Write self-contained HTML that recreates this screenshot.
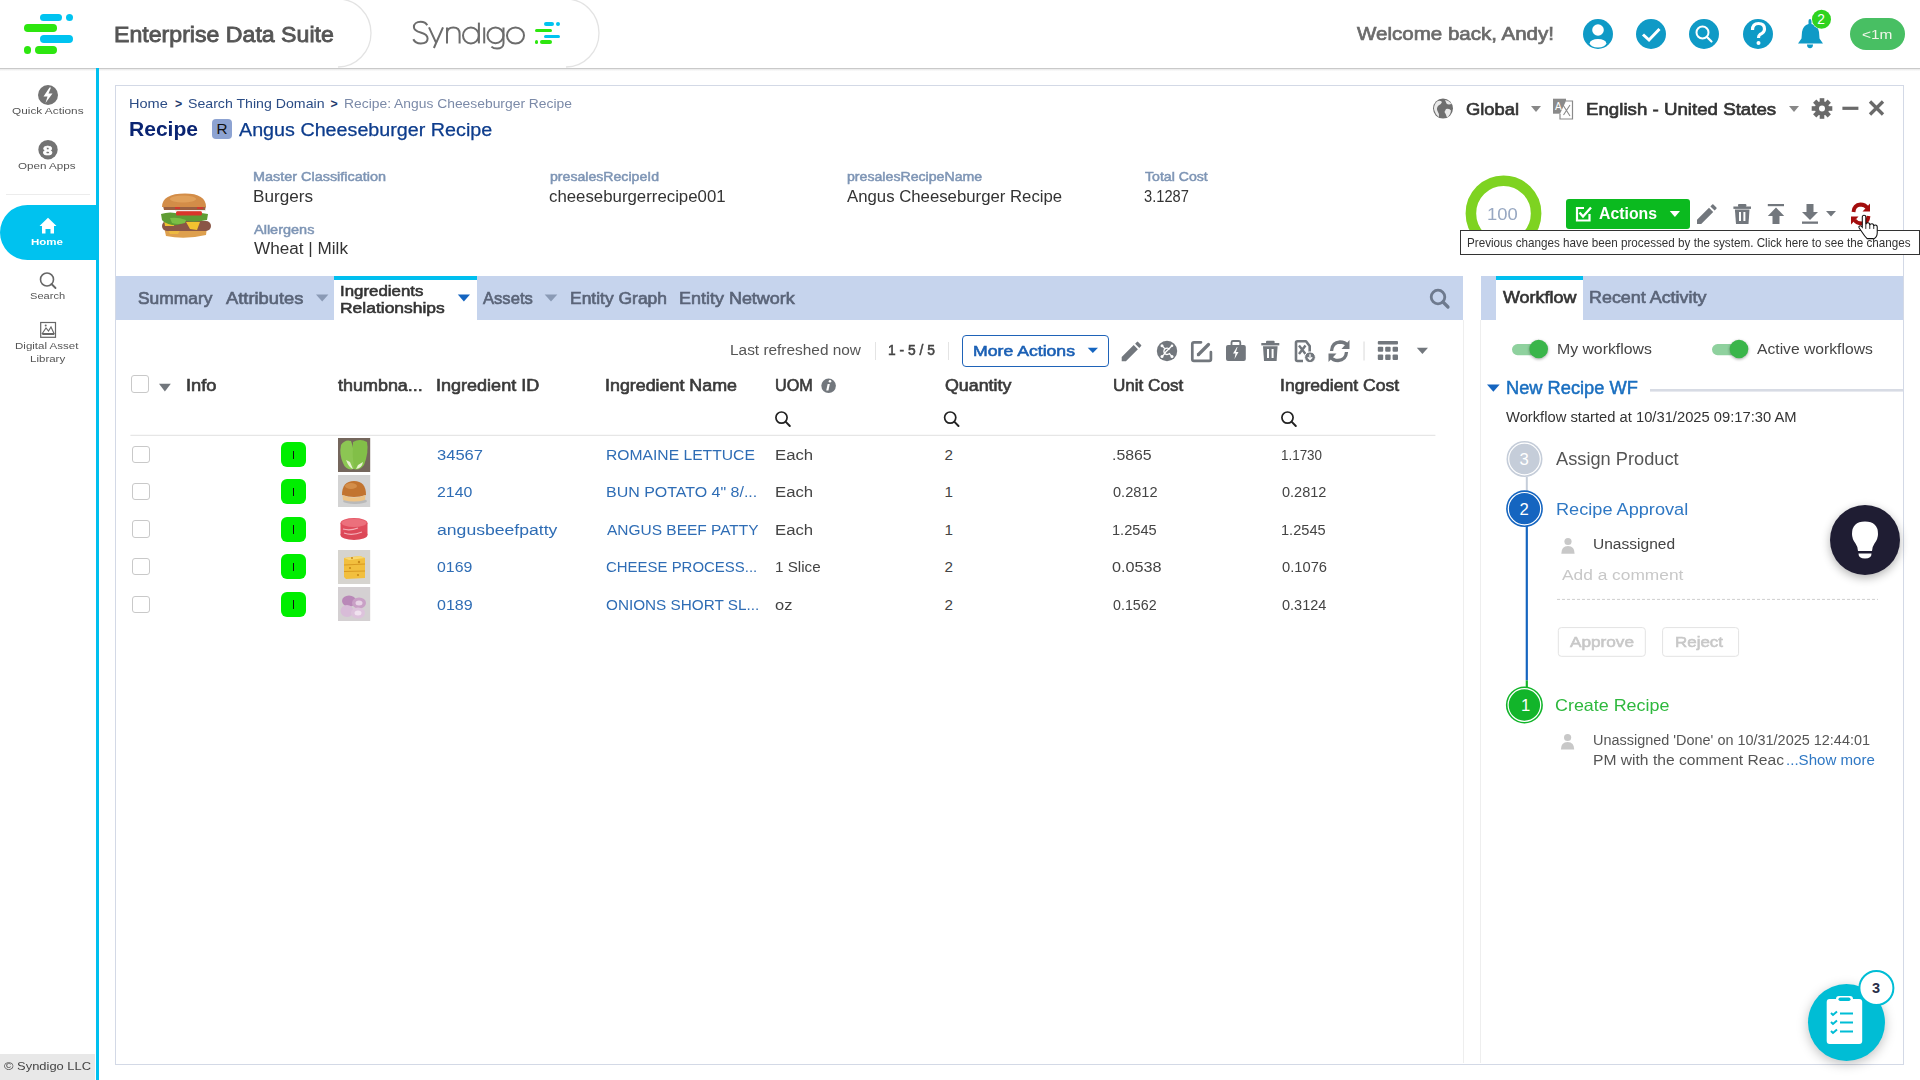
<!DOCTYPE html>
<html><head><meta charset="utf-8"><style>
html,body{margin:0;padding:0;width:1920px;height:1080px;overflow:hidden;background:#fff;}
body{position:relative;font-family:"Liberation Sans",sans-serif;}
.t{position:absolute;white-space:nowrap;line-height:1;transform-origin:0 0;}
svg{overflow:visible}
</style></head><body>
<div style="position:absolute;left:0;top:0;width:1920px;height:68px;background:#fff;"></div>
<div style="position:absolute;left:0;top:68px;width:1920px;height:1px;background:#c9c9c9;"></div>
<div style="position:absolute;left:0;top:69px;width:1920px;height:2px;background:linear-gradient(#e8e8e8,#fdfdfd);"></div>
<svg style="position:absolute;left:0;top:0" width="700" height="70"><path d="M338,-1 A33,34 0 0 1 338,67" fill="none" stroke="#e3e3e3" stroke-width="1.3"/><path d="M566,-1 A33,34 0 0 1 566,67" fill="none" stroke="#e3e3e3" stroke-width="1.3"/></svg>
<div style="position:absolute;left:40px;top:13.5px;width:22px;height:7.5px;background:#00c3f0;border-radius:3.75px"></div>
<div style="position:absolute;left:65.7px;top:13.5px;width:7.0px;height:7.5px;background:#00c3f0;border-radius:3.75px"></div>
<div style="position:absolute;left:24px;top:24.2px;width:32.6px;height:7.600000000000001px;background:#2de60f;border-radius:3.8000000000000007px"></div>
<div style="position:absolute;left:40px;top:35px;width:32.7px;height:7.799999999999997px;background:#00c3f0;border-radius:3.8999999999999986px"></div>
<div style="position:absolute;left:24px;top:46px;width:7px;height:7.799999999999997px;background:#2de60f;border-radius:3.8999999999999986px"></div>
<div style="position:absolute;left:35px;top:46px;width:21.6px;height:7.799999999999997px;background:#2de60f;border-radius:3.8999999999999986px"></div>
<svg style="position:absolute;left:0;top:0" width="600" height="68"><g fill="none" stroke="#6c6c6c" stroke-width="2" stroke-linecap="butt">
<path d="M427.2,25.3 C426,22.8 423.6,21.8 420.6,21.8 C416.6,21.8 413.9,24 413.9,27 C413.9,30.5 417.2,31.6 420.6,32.5 C424.6,33.5 427.6,35 427.6,38.6 C427.6,41.8 424.7,43.5 420.8,43.5 C417.4,43.5 414.6,42 413.3,39.3"/>
<path d="M429,27.4 L436.4,43.4 M443,27.4 L433.9,48"/>
<path d="M447,43.4 L447,27.4 M447,33.6 C447,29.8 449.5,27.5 453.3,27.5 C457.1,27.5 459.6,29.8 459.6,33.8 L459.6,43.4"/>
<ellipse cx="470.9" cy="35.5" rx="7.9" ry="8"/><path d="M478.9,22.6 L478.9,43.4"/>
<path d="M484.2,27.4 L484.2,43.4"/>
<ellipse cx="495.5" cy="35.3" rx="8" ry="7.9"/><path d="M503.5,27.4 L503.5,43.2 C503.5,46.6 500.6,48.6 497.1,48.6 C494.6,48.6 492.6,47.8 491.4,46.6"/>
<ellipse cx="515.5" cy="35.5" rx="8.5" ry="8"/>
</g></svg>
<div style="position:absolute;left:543.5px;top:22px;width:10.5px;height:3.5px;background:#00c3f0;border-radius:2px"></div>
<div style="position:absolute;left:556px;top:22px;width:4px;height:3.5px;background:#00c3f0;border-radius:2px"></div>
<div style="position:absolute;left:534.7px;top:28.5px;width:17.299999999999955px;height:3.5px;background:#2de60f;border-radius:2px"></div>
<div style="position:absolute;left:543.5px;top:34.5px;width:16.5px;height:3.5px;background:#00c3f0;border-radius:2px"></div>
<div style="position:absolute;left:534.7px;top:40px;width:3.2999999999999545px;height:3.5px;background:#2de60f;border-radius:2px"></div>
<div style="position:absolute;left:540px;top:40px;width:12px;height:3.5px;background:#2de60f;border-radius:2px"></div>
<svg style="position:absolute;left:1570px;top:0" width="350" height="68">
<circle cx="28" cy="34" r="15" fill="#0f9ac6"/>
<circle cx="28" cy="30" r="5.8" fill="#fff"/>
<ellipse cx="28" cy="43.3" rx="8.3" ry="4.2" fill="#fff"/>
<circle cx="81" cy="34" r="15" fill="#0f9ac6"/>
<path d="M73,34.5 L79,40 L89.5,29" fill="none" stroke="#fff" stroke-width="3"/>
<circle cx="134" cy="34" r="15" fill="#0f9ac6"/>
<circle cx="132.5" cy="32.5" r="6" fill="none" stroke="#fff" stroke-width="2"/>
<path d="M137,37 L141.5,41.5" stroke="#fff" stroke-width="2.2" stroke-linecap="round"/>
<circle cx="188" cy="34" r="15" fill="#0f9ac6"/>
<path d="M182.5,30 Q182.5,23.5 188.5,23.5 Q194.5,23.5 194.5,29 Q194.5,32.5 190,34.5 Q188.5,35.5 188.5,38" fill="none" stroke="#fff" stroke-width="3.2"/>
<circle cx="188.5" cy="43" r="2" fill="#fff"/>
<path d="M240,19 Q241.5,19 241.5,21 L241.5,24 Q248,25.5 249,32 L249.5,38.5 L253,43.5 L228,43.5 L231.5,38.5 L232,32 Q233,25.5 238.5,24 L238.5,21 Q238.5,19 240,19Z" fill="#0f9ac6"/>
<path d="M237,44.5 L243,44.5 Q243,48.3 240,48.3 Q237,48.3 237,44.5Z" fill="#0f9ac6"/>
<circle cx="251.5" cy="19.3" r="10" fill="#fff"/>
<circle cx="251.5" cy="19.3" r="9.5" fill="#2fd31f"/>
<rect x="280" y="18" width="55" height="32" rx="16" fill="#48bf63"/>
</svg>
<div style="position:absolute;left:96px;top:68px;width:3px;height:1012px;background:#00c0ef"></div>
<svg style="position:absolute;left:0;top:68px" width="96" height="320">
<circle cx="48" cy="27" r="10" fill="#737373"/>
<path d="M49.5,19.5 L43.5,28.5 L47.5,28.5 L45.5,35 L52.5,25.5 L48.5,25.5 L51,19.5Z" fill="#fff"/>
<circle cx="48" cy="81.7" r="9.7" fill="#737373"/>
<line x1="6" y1="126.5" x2="90" y2="126.5" stroke="#ececec" stroke-width="1"/>
</svg>
<div style="position:absolute;left:0;top:205px;width:96px;height:55px;background:#00c2ef;border-radius:27.5px 0 0 27.5px"></div>
<svg style="position:absolute;left:0;top:200px" width="96" height="200">
<path d="M48,17.8 L56.5,26 L54,26 L54,33.6 L50.5,33.6 L50.5,29 L45.5,29 L45.5,33.6 L42,33.6 L42,26 L39.5,26Z" fill="#fff"/>
<circle cx="47" cy="79.5" r="6.5" fill="none" stroke="#666" stroke-width="1.6"/>
<path d="M51.5,84 L55.5,88" stroke="#666" stroke-width="1.8" stroke-linecap="round"/>
<rect x="40.7" y="122.5" width="14.8" height="14.8" fill="none" stroke="#666" stroke-width="1.2"/>
<path d="M42.3,133.5 L46,128 L48.5,131 L51,127 L54,133.5Z" fill="none" stroke="#666" stroke-width="1.1"/>
<rect x="42.3" y="133" width="12" height="2" fill="#666"/>
<circle cx="45.7" cy="125.5" r="1" fill="#666"/>
</svg>
<div style="position:absolute;left:0;top:1054px;width:95px;height:26px;background:#e8e8e8"></div>
<div style="position:absolute;left:115px;top:85px;width:1787px;height:978px;border:1px solid #d3d9e6;background:#fff"></div>
<div style="position:absolute;left:212px;top:119px;width:20px;height:20px;background:#8da3d2;border-radius:4px"></div>
<svg style="position:absolute;left:1420px;top:88px" width="480" height="40">
<circle cx="23" cy="20.6" r="10" fill="#6f6f6f"/>
<path d="M17,13.5 Q20,12 22,14 Q21,17 18.5,17.5 Q16,20 17.5,23 Q19.5,26 19,29 Q15,26 14,21 Q14,16 17,13.5Z" fill="#e9e9e9"/>
<path d="M25,12 Q29,12.5 31.5,16 Q28,17 26.5,15.5Z M26,21 Q29.5,20 31,22.5 Q30.5,27 27,29.5 Q26,26 24.5,24Z" fill="#e9e9e9"/>
<path d="M111,18 L121,18 L116,24Z" fill="#888"/>
<rect x="133" y="10.7" width="13" height="15" fill="#8a8a8a"/>
<text x="135" y="22" font-family="Liberation Sans" font-size="10" fill="#fff">A</text>
<path d="M146,13 L152.5,13 L152.5,31 L140,31 L140,25.7" fill="#fff" stroke="#8a8a8a" stroke-width="1.2"/>
<path d="M143,17 L150,28 M150,17 L143.5,27" stroke="#8a8a8a" stroke-width="1.1"/>
<path d="M369,18 L379,18 L374,24Z" fill="#888"/>
</svg>
<svg style="position:absolute;left:1800px;top:88px" width="100" height="40">
<g transform="translate(22,20.5)" fill="#6a6a6a">
<circle r="7.2"/>
<g id="tooth"><rect x="-2.3" y="-10.3" width="4.6" height="4.5"/></g>
<use href="#tooth" transform="rotate(45)"/><use href="#tooth" transform="rotate(90)"/><use href="#tooth" transform="rotate(135)"/>
<use href="#tooth" transform="rotate(180)"/><use href="#tooth" transform="rotate(225)"/><use href="#tooth" transform="rotate(270)"/><use href="#tooth" transform="rotate(315)"/>
<circle r="3" fill="#fff"/>
</g>
<rect x="42.4" y="18.7" width="16" height="3.2" fill="#6a6a6a"/>
<path d="M70,13.5 L83,26.5 M83,13.5 L70,26.5" stroke="#6a6a6a" stroke-width="3.3"/>
</svg>
<svg style="position:absolute;left:150px;top:180px" width="70" height="70">
<path d="M14,47 L57,47 L56,55 Q35,60 16,56Z" fill="#dea04e"/>
<path d="M18,50 L30,50 L28,54 L20,54Z" fill="#f0c040" opacity="0.8"/>
<rect x="12" y="41" width="49" height="10" rx="5" fill="#8a5646"/>
<path d="M14,40 L25,40 L24,46 L15,46Z M36,42 L50,42 L47,50 L40,49Z" fill="#f2c230"/>
<path d="M11,34 Q20,31 30,34 Q45,31 58,34 L57,40 Q45,43 36,41 Q30,46 22,45 Q14,43 12,40Z" fill="#5f9c34"/>
<path d="M20,38 Q28,37 36,40 L35,43 Q28,45 22,43Z" fill="#7bbf45"/>
<rect x="26" y="31" width="26" height="4.5" rx="1.5" fill="#d9362a"/>
<rect x="25" y="29" width="31" height="2.2" fill="#f1ebe6"/>
<path d="M13,26 L56,26 L55,30 L14,30Z" fill="#9a6040"/>
<rect x="25" y="26" width="5" height="3" fill="#d03a30"/><rect x="47" y="26" width="6" height="3" fill="#d03a30"/>
<path d="M12,27 Q12,13.5 35,13.5 Q56,13.5 56,27Z" fill="#d38d48"/>
<ellipse cx="33" cy="19" rx="13" ry="3.5" fill="#e6a862" opacity="0.7"/>
</svg>
<svg style="position:absolute;left:1455px;top:165px" width="100" height="100">
<circle cx="48.5" cy="48.4" r="32.6" fill="none" stroke="#7ed321" stroke-width="10.6"/>
</svg>
<div style="position:absolute;left:1566px;top:199px;width:124px;height:30px;background:#0bba1f;border-radius:3px"></div>
<svg style="position:absolute;left:1566px;top:199px" width="124" height="30">
<path d="M18,9 L11,9 L11,21.5 L23.5,21.5 L23.5,15" fill="none" stroke="#fff" stroke-width="2.2"/>
<path d="M13.5,13.5 L17,17.5 L25,8.5" fill="none" stroke="#fff" stroke-width="2.4"/>
<path d="M103.8,12 L114,12 L108.9,18Z" fill="#fff"/>
</svg>
<svg style="position:absolute;left:1690px;top:190px" width="230" height="50">
<g transform="translate(7,14)"><path d="M0,20 L0,15.8 L12,3.8 L16.2,8 L4.2,20Z M13.4,2.4 L15.2,0.6 Q15.8,0 16.4,0.6 L19.4,3.6 Q20,4.2 19.4,4.8 L17.6,6.6Z" fill="#72777d"/></g>
<rect x="43.4" y="16.5" width="17.6" height="2.4" fill="#72777d"/>
<rect x="48" y="14" width="8.4" height="3" rx="1" fill="#72777d"/>
<path d="M44.9,19.5 L59.5,19.5 L58.5,34 L46,34Z" fill="#72777d"/>
<rect x="49" y="22" width="2" height="9" fill="#fff"/><rect x="53.4" y="22" width="2" height="9" fill="#fff"/>
<rect x="77.8" y="14" width="16.2" height="2.2" fill="#72777d"/>
<path d="M86,17.5 L94.2,26 L89.5,26 L89.5,34 L82.5,34 L82.5,26 L77.8,26Z" fill="#72777d"/>
<path d="M116.5,14 L123.5,14 L123.5,22 L128,22 L120,30 L112,22 L116.5,22Z" fill="#72777d"/>
<rect x="112" y="31.5" width="16" height="2.3" fill="#72777d"/>
<path d="M136,21 L146,21 L141,26.6Z" fill="#72777d"/>
<path d="M163.5,22 Q164,15 170.5,14.5 Q175,14.5 177.5,18" fill="none" stroke="#a30d0d" stroke-width="3.8"/>
<path d="M180,13.5 L180,21.5 L172.5,21.5Z" fill="#a50e0e"/>
<path d="M178.5,26 Q178,33 171.5,33.5 Q167,33.5 164.5,30" fill="none" stroke="#a30d0d" stroke-width="3.8"/>
<path d="M161,34.5 L161,26.5 L168.5,26.5Z" fill="#a50e0e"/>
</svg>
<div style="position:absolute;left:1460px;top:230px;width:458px;height:23px;border:1px solid #333;background:#fff"></div>
<svg style="position:absolute;left:1857px;top:214px" width="22.9" height="26.4" viewBox="0 0 26 30">
<path d="M6,3.5 Q6,1.5 8,1.5 Q10,1.5 10,3.5 L10,12 Q10.5,10 12.5,10 Q14.5,10 14.5,12.5 Q15,11 17,11 Q19,11 19,13.5 Q19.5,12.5 21,12.5 Q23,12.5 23,15 L23,21 Q23,26 19.5,28 L11.5,28 Q8.5,25 6,21 L2.5,16 Q1.5,14 3,13.5 Q4.5,13 6,15Z" fill="#fff" stroke="#111" stroke-width="1.2"/>
<path d="M10,12 L10,17 M14.5,12.5 L14.5,17 M19,13.5 L19,17" stroke="#111" stroke-width="1"/>
</svg>
<div style="position:absolute;left:116px;top:276px;width:1347px;height:44px;background:#c6d4ed"></div>
<div style="position:absolute;left:334px;top:276px;width:143px;height:44px;background:#fff;border-top:4px solid #00bfef;box-sizing:border-box"></div>
<div style="position:absolute;left:1481px;top:276px;width:422px;height:44px;background:#c6d4ed"></div>
<div style="position:absolute;left:1496px;top:276px;width:87px;height:44px;background:#fff;border-top:4px solid #00bfef;box-sizing:border-box"></div>
<svg style="position:absolute;left:0;top:270px" width="1470" height="50">
<path d="M316,24.4 L328.4,24.4 L322.2,31.5Z" fill="#8a9ab5"/>
<path d="M457.8,24.4 L470,24.4 L463.9,31.5Z" fill="#1565c0"/>
<path d="M544.7,24.4 L557.3,24.4 L551,31.5Z" fill="#8a9ab5"/>
<circle cx="1438" cy="27" r="6.8" fill="none" stroke="#6e7a8e" stroke-width="2.8"/>
<path d="M1443,32 L1448,37" stroke="#6e7a8e" stroke-width="3.2" stroke-linecap="round"/>
</svg>
<div style="position:absolute;left:1463px;top:320px;width:1px;height:743px;background:#eeeeee"></div>
<div style="position:absolute;left:1480px;top:320px;width:1px;height:743px;background:#eeeeee"></div>
<div style="position:absolute;left:874.5px;top:341.5px;width:1.5px;height:18.5px;background:#e4e4e4"></div>
<div style="position:absolute;left:947.8px;top:341.5px;width:1.5px;height:18.5px;background:#e4e4e4"></div>
<div style="position:absolute;left:962px;top:335px;width:147px;height:32px;border:1.5px solid #1f63b8;border-radius:4px;box-sizing:border-box"></div>
<svg style="position:absolute;left:1080px;top:340px" width="30" height="20"><path d="M7.7,7.7 L18,7.7 L12.85,13Z" fill="#1565c0"/></svg>
<svg style="position:absolute;left:1110px;top:332px" width="330" height="40">
<g transform="translate(11.7,9.3)"><path d="M0,20 L0,15.8 L12,3.8 L16.2,8 L4.2,20Z M13.4,2.4 L15.2,0.6 Q15.8,0 16.4,0.6 L19.4,3.6 Q20,4.2 19.4,4.8 L17.6,6.6Z" fill="#72777d"/></g>
<circle cx="57" cy="19" r="10.2" fill="#72777d"/>
<g stroke="#fff" stroke-width="1.3" fill="none">
<path d="M52,13.7 L54.8,16.6 M62,13.7 L54,21.7 M52,24.5 L54.8,21.6 M62,24.5 L59.3,21.6"/>
<path d="M59.6,17.3 A3.2,3.2 0 1 0 59.8,21"/>
</g>
<g fill="#fff"><circle cx="52" cy="13.7" r="1.5"/><circle cx="62" cy="13.7" r="1.3"/><circle cx="52" cy="24.5" r="1.5"/><circle cx="62" cy="24.5" r="1.5"/></g>
<path d="M91,10.3 L84,10.3 Q82.3,10.3 82.3,12 L82.3,27.2 Q82.3,28.9 84,28.9 L99.2,28.9 Q100.9,28.9 100.9,27.2 L100.9,20" fill="none" stroke="#72777d" stroke-width="2.7" stroke-linecap="round"/>
<path d="M88.5,22.5 L98.5,12.5" stroke="#72777d" stroke-width="3.2" stroke-linecap="round"/>
<path d="M86.8,24.2 L87.5,21 L90,23.5Z" fill="#72777d"/>
<rect x="116" y="13" width="19.8" height="16" rx="2" fill="#72777d"/>
<path d="M121.5,13 L121.5,10.5 Q121.5,9 123,9 L128.8,9 Q130.3,9 130.3,10.5 L130.3,13" fill="none" stroke="#72777d" stroke-width="1.8"/>
<path d="M127,15 L123,21.5 L125.5,21.5 L124.5,27 L128.5,20 L126,20 L127.5,15Z" fill="#fff"/>
<rect x="151.3" y="11" width="18" height="2.4" fill="#72777d"/>
<rect x="156" y="8.7" width="8.6" height="3" rx="1" fill="#72777d"/>
<path d="M153,14.3 L167.6,14.3 L166.6,29 L154,29Z" fill="#72777d"/>
<rect x="157" y="17" width="2" height="9" fill="#fff"/><rect x="161.6" y="17" width="2" height="9" fill="#fff"/>
<path d="M199.7,21 L199.7,14 L196,9.3 L187.5,9.3 Q186,9.3 186,10.8 L186,27.5 Q186,29 187.5,29 L193,29" fill="none" stroke="#72777d" stroke-width="2.6" stroke-linejoin="round"/>
<path d="M189,13.5 L195.5,22 M195.5,13.5 L189,22" stroke="#72777d" stroke-width="2.4"/>
<circle cx="200" cy="25.3" r="5.4" fill="#72777d" stroke="#fff" stroke-width="1"/>
<path d="M200,22.3 L200,27.5 M197.8,25.3 L200,27.6 L202.2,25.3" stroke="#fff" stroke-width="1.3" fill="none"/>
<path d="M221.5,19 Q222,10.5 230,10 Q235,10 237.5,13.5" fill="none" stroke="#72777d" stroke-width="3.3"/>
<path d="M239.5,8 L239.5,17 L231.5,17Z" fill="#72777d"/>
<path d="M236.5,20 Q236,28 228,28.5 Q223,28.5 220.5,25" fill="none" stroke="#72777d" stroke-width="3.3"/>
<path d="M218.5,30 L218.5,21.5 L226.5,21.5Z" fill="#72777d"/>
<rect x="253.3" y="9.5" width="1.5" height="19" fill="#e6e6e6"/>
<rect x="267.8" y="9" width="20.2" height="3.6" rx="1" fill="#72777d"/>
<rect x="267.8" y="14.8" width="5.4" height="5" rx="1" fill="#72777d"/><rect x="275.2" y="14.8" width="5.4" height="5" rx="1" fill="#72777d"/><rect x="282.6" y="14.8" width="5.4" height="5" rx="1" fill="#72777d"/>
<rect x="267.8" y="22.5" width="5.4" height="5.5" rx="1" fill="#72777d"/><rect x="275.2" y="22.5" width="5.4" height="5.5" rx="1" fill="#72777d"/><rect x="282.6" y="22.5" width="5.4" height="5.5" rx="1" fill="#72777d"/>
<path d="M306.8,15.8 L318,15.8 L312.4,22Z" fill="#72777d"/>
</svg>
<div style="position:absolute;left:131px;top:375px;width:17.5px;height:17.5px;border:1px solid #c9c9c9;border-radius:3px;box-sizing:border-box;background:#fff"></div>
<svg style="position:absolute;left:0;top:370px" width="1440" height="70">
<path d="M159,13.8 L170.8,13.8 L164.9,21.6Z" fill="#72777d"/>
<circle cx="828.6" cy="15.8" r="7.3" fill="#72777d"/>
<rect x="827.6" y="14" width="2.2" height="6.5" fill="#fff" transform="skewX(-12) translate(3,0)"/>
<circle cx="830" cy="11.3" r="1.3" fill="#fff"/>
<g fill="none" stroke="#222" stroke-width="1.7">
<circle cx="781.5" cy="47.6" r="5.6"/><circle cx="950.2" cy="47.6" r="5.6"/><circle cx="1287.5" cy="47.6" r="5.6"/>
</g>
<g stroke="#222" stroke-width="2" stroke-linecap="round">
<path d="M785.8,51.9 L789.8,56"/><path d="M954.5,51.9 L958.5,56"/><path d="M1291.8,51.9 L1295.8,56"/>
</g>
<rect x="130.4" y="64.8" width="1305" height="1" fill="#e0e0e0"/>
</svg>
<div style="position:absolute;left:132px;top:445.7px;width:17.5px;height:17.5px;border:1px solid #c9c9c9;border-radius:3px;box-sizing:border-box;background:#fff"></div>
<div style="position:absolute;left:280.6px;top:442.0px;width:25.4px;height:25px;background:#00ee00;border-radius:6px"></div>
<div style="position:absolute;left:292.6px;top:450.5px;width:1.5px;height:8.5px;background:#111"></div>
<svg style="position:absolute;left:337.8px;top:437.5px" width="32.2" height="34"><rect width="32.2" height="34" fill="#74665c"/>
<path d="M3,7 Q7,1 13,3 Q17,12 16,31 Q8,33 5,25 Q1,16 3,7Z" fill="#8cc653"/><path d="M15,4 Q22,0 29,4 Q31,14 26,27 Q21,33 16,31 Q14,18 15,4Z" fill="#82bf48"/>
<path d="M8,22 Q11,30 15,31 L12,24Z M18,31 Q24,30 25,24 L20,27Z" fill="#e8f2d0"/></svg>
<div style="position:absolute;left:132px;top:482.7px;width:17.5px;height:17.5px;border:1px solid #c9c9c9;border-radius:3px;box-sizing:border-box;background:#fff"></div>
<div style="position:absolute;left:280.6px;top:479.0px;width:25.4px;height:25px;background:#00ee00;border-radius:6px"></div>
<div style="position:absolute;left:292.6px;top:487.5px;width:1.5px;height:8.5px;background:#111"></div>
<svg style="position:absolute;left:337.8px;top:474.5px" width="32.2" height="32"><rect width="32.2" height="32" fill="#d3d3d3"/>
<ellipse cx="17" cy="26" rx="12" ry="3" fill="#a0a0a0" opacity="0.5"/><path d="M4,20 Q4,6 16,6 Q28,6 28,20 Q16,24 4,20Z" fill="#c27430"/>
<ellipse cx="13" cy="11" rx="6" ry="3" fill="#dc9a55" opacity="0.7"/>
<path d="M4.5,20 Q16,25 27.5,20 L27,25 Q16,28 5,25Z" fill="#eec487"/></svg>
<div style="position:absolute;left:132px;top:520.2px;width:17.5px;height:17.5px;border:1px solid #c9c9c9;border-radius:3px;box-sizing:border-box;background:#fff"></div>
<div style="position:absolute;left:280.6px;top:516.5px;width:25.4px;height:25px;background:#00ee00;border-radius:6px"></div>
<div style="position:absolute;left:292.6px;top:525px;width:1.5px;height:8.5px;background:#111"></div>
<svg style="position:absolute;left:337.8px;top:512px" width="32.2" height="34"><rect width="32.2" height="34" fill="#fff"/>
<ellipse cx="16" cy="11" rx="13.5" ry="5" fill="#e65a68"/><rect x="2.5" y="11" width="27" height="12" fill="#df4c5c"/><ellipse cx="16" cy="23" rx="13.5" ry="5" fill="#dc4858"/>
<ellipse cx="16" cy="11" rx="12.5" ry="4" fill="#ec707c"/>
<path d="M5,17 Q12,19 20,16 M6,21 Q14,24 24,20" stroke="#f3b0b8" stroke-width="1.2" fill="none"/></svg>
<div style="position:absolute;left:132px;top:557.7px;width:17.5px;height:17.5px;border:1px solid #c9c9c9;border-radius:3px;box-sizing:border-box;background:#fff"></div>
<div style="position:absolute;left:280.6px;top:554.0px;width:25.4px;height:25px;background:#00ee00;border-radius:6px"></div>
<div style="position:absolute;left:292.6px;top:562.5px;width:1.5px;height:8.5px;background:#111"></div>
<svg style="position:absolute;left:337.8px;top:549.5px" width="32.2" height="34"><rect width="32.2" height="34" fill="#d6d4cf"/>
<path d="M6,8 L22,6 L27,8 L27,28 L8,29 L6,27Z" fill="#f2bf3e"/><path d="M6,8 L22,6 L27,8 L11,10Z" fill="#f8d870"/>
<path d="M6,15 L27,14 M6,21.5 L27,21" stroke="#d99a22" stroke-width="1"/>
<circle cx="14" cy="8" r="1" fill="#c98a18"/><circle cx="21" cy="12" r="1.2" fill="#c98a18"/><circle cx="12" cy="18" r="1.1" fill="#c98a18"/><circle cx="20" cy="25" r="1.1" fill="#c98a18"/></svg>
<div style="position:absolute;left:132px;top:595.5px;width:17.5px;height:17.5px;border:1px solid #c9c9c9;border-radius:3px;box-sizing:border-box;background:#fff"></div>
<div style="position:absolute;left:280.6px;top:591.8px;width:25.4px;height:25px;background:#00ee00;border-radius:6px"></div>
<div style="position:absolute;left:292.6px;top:600.3px;width:1.5px;height:8.5px;background:#111"></div>
<svg style="position:absolute;left:337.8px;top:587.3px" width="32.2" height="34"><rect width="32.2" height="34" fill="#d4d0d2"/>
<ellipse cx="11" cy="14" rx="7" ry="5.5" fill="#b988b8"/><ellipse cx="21" cy="16" rx="7" ry="5.5" fill="#c9a0c6"/><ellipse cx="9" cy="24" rx="6.5" ry="6" fill="#d8bcd8"/><ellipse cx="20" cy="26" rx="7" ry="5.5" fill="#ddc3dc"/>
<ellipse cx="20" cy="26" rx="3.5" ry="2.5" fill="#f0e2ef"/><ellipse cx="21" cy="16" rx="3.5" ry="2.5" fill="#e8d4e6"/></svg>
<svg style="position:absolute;left:1480px;top:325px" width="440" height="460">
<rect x="32" y="19" width="26" height="11.2" rx="5.6" fill="#8fd19e"/>
<circle cx="58.7" cy="24" r="9.3" fill="#3ab54a" style="filter:drop-shadow(0 1.5px 1.5px rgba(0,0,0,.35))"/>
<rect x="232" y="19" width="26" height="11.2" rx="5.6" fill="#8fd19e"/>
<circle cx="259" cy="24" r="9.3" fill="#3ab54a" style="filter:drop-shadow(0 1.5px 1.5px rgba(0,0,0,.35))"/>
<path d="M7,59.4 L19.7,59.4 L13.35,66.7Z" fill="#1565c0"/>
<rect x="170" y="64" width="253" height="2.6" fill="#d7dbe4"/>
<line x1="46.8" y1="152" x2="46.8" y2="166" stroke="#c5cdd9" stroke-width="2"/>
<line x1="46.8" y1="183" x2="46.8" y2="355.4" stroke="#1565c0" stroke-width="2.2"/>
<line x1="46.8" y1="355.4" x2="46.8" y2="362" stroke="#12b52a" stroke-width="2.2"/>
<circle cx="44.5" cy="134" r="18" fill="#c5cdd9"/><circle cx="44.5" cy="134" r="15.8" fill="none" stroke="#fff" stroke-width="1.2"/>
<circle cx="44.5" cy="183.7" r="18.4" fill="#1565c0"/><circle cx="44.5" cy="183.7" r="16.2" fill="none" stroke="#fff" stroke-width="1.2"/>
<circle cx="44.4" cy="380" r="18.5" fill="#12b52a"/><circle cx="44.4" cy="380" r="16.3" fill="none" stroke="#fff" stroke-width="1.2"/>
<g fill="#c8c8c8">
<circle cx="88" cy="216.5" r="3.6"/><path d="M81.3,228.7 Q81.3,221 88,221 Q94.6,221 94.6,228.7Z"/>
<circle cx="87.6" cy="412.5" r="3.6"/><path d="M80.9,424.6 Q80.9,417 87.6,417 Q94.2,417 94.2,424.6Z"/>
</g>
<line x1="77" y1="274.4" x2="398" y2="274.4" stroke="#cfcfcf" stroke-width="1" stroke-dasharray="3,2"/>
<rect x="78.3" y="302.6" width="87" height="28.7" rx="3" fill="#fff" stroke="#e3e3e3" stroke-width="1"/>
<rect x="182.6" y="302.6" width="76" height="28.7" rx="3" fill="#fff" stroke="#e3e3e3" stroke-width="1"/>
</svg>
<div style="position:absolute;left:1830px;top:505px;width:70px;height:70px;border-radius:50%;background:#1f1d33;box-shadow:0 3px 10px rgba(0,0,0,.3)"></div>
<svg style="position:absolute;left:1830px;top:505px" width="70" height="70">
<path d="M35,16.5 Q48,16.5 48,29 Q48,34 44.5,38.5 Q42,42 42,46 L28,46 Q28,42 25.5,38.5 Q22,34 22,29 Q22,16.5 35,16.5Z" fill="#fff"/>
<path d="M28.5,48.5 L41.5,48.5 Q41.5,53.5 35,53.5 Q28.5,53.5 28.5,48.5Z" fill="#fff"/>
</svg>
<div style="position:absolute;left:1808px;top:984px;width:77px;height:77px;border-radius:50%;background:#00bdd5;box-shadow:0 3px 12px rgba(0,0,0,.25)"></div>
<svg style="position:absolute;left:1800px;top:965px" width="120" height="100">
<rect x="26.7" y="34" width="35.5" height="45" rx="3" fill="#fff"/>
<rect x="36" y="31" width="17" height="6" rx="3" fill="#fff"/>
<rect x="38.5" y="32.5" width="12" height="3.5" rx="1.7" fill="#00bdd5"/>
<g stroke="#00bdd5" stroke-width="2" fill="none">
<path d="M31,48 L33,50 L37,46.5 M31,57 L33,59 L37,55.5 M31,66 L33,68 L37,64.5"/>
<path d="M40,48.5 L53,48.5 M40,57.5 L53,57.5 M40,66.5 L53,66.5"/>
</g>
<circle cx="76.4" cy="23" r="17" fill="#fff" stroke="#00bdd5" stroke-width="2"/>
</svg>
<div id="t0" class="t" style="left:113.60px;top:23.01px;font-size:22.82px;font-weight:400;color:#555;-webkit-text-stroke:0.87px #555;transform:scaleX(1.0137);">Enterprise Data Suite</div>
<div id="t1" class="t" style="left:1357.00px;top:25.01px;font-size:18.17px;font-weight:400;color:#6b6b6b;-webkit-text-stroke:0.69px #6b6b6b;transform:scaleX(1.1306);">Welcome back, Andy!</div>
<div id="t2" class="t" style="left:1817.20px;top:13.01px;font-size:13.81px;font-weight:400;color:#fff;">2</div>
<div id="t3" class="t" style="left:1862.40px;top:28.00px;font-size:13.08px;font-weight:400;color:#f0f5e8;transform:scaleX(1.1819);">&lt;1m</div>
<div id="t4" class="t" style="left:42.90px;top:144.00px;font-size:13.52px;font-weight:700;color:#fff;-webkit-text-stroke:0.7px #fff;transform:scaleX(1.25);">8</div>
<div id="t5" class="t" style="left:12.00px;top:106.00px;font-size:9.45px;font-weight:400;color:#555;transform:scaleX(1.2522);">Quick Actions</div>
<div id="t6" class="t" style="left:18.40px;top:161.01px;font-size:9.45px;font-weight:400;color:#555;transform:scaleX(1.2340);">Open Apps</div>
<div id="t7" class="t" style="left:31.20px;top:237.01px;font-size:9.59px;font-weight:700;color:#fff;transform:scaleX(1.2031);">Home</div>
<div id="t8" class="t" style="left:29.80px;top:291.01px;font-size:9.45px;font-weight:400;color:#555;transform:scaleX(1.1727);">Search</div>
<div id="t9" class="t" style="left:15.40px;top:341.01px;font-size:9.45px;font-weight:400;color:#555;transform:scaleX(1.2209);">Digital Asset</div>
<div id="t10" class="t" style="left:29.80px;top:354.02px;font-size:9.45px;font-weight:400;color:#555;transform:scaleX(1.2210);">Library</div>
<div id="t11" class="t" style="left:4.00px;top:1061.02px;font-size:11.34px;font-weight:400;color:#444;transform:scaleX(1.1393);">© Syndigo LLC</div>
<div id="t12" class="t" style="left:129.20px;top:98.00px;font-size:12.35px;font-weight:400;color:#2b4c85;transform:scaleX(1.1796);">Home</div>
<div id="t13" class="t" style="left:175.00px;top:98.00px;font-size:12.35px;font-weight:700;color:#1e3a6e;">&gt;</div>
<div id="t14" class="t" style="left:187.50px;top:98.00px;font-size:12.35px;font-weight:400;color:#2b4c85;transform:scaleX(1.1455);">Search Thing Domain</div>
<div id="t15" class="t" style="left:330.60px;top:98.00px;font-size:12.35px;font-weight:700;color:#1e3a6e;">&gt;</div>
<div id="t16" class="t" style="left:344.00px;top:98.00px;font-size:12.35px;font-weight:400;color:#7b8aa8;transform:scaleX(1.1225);">Recipe: Angus Cheeseburger Recipe</div>
<div id="t17" class="t" style="left:129.00px;top:119.01px;font-size:20.35px;font-weight:700;color:#0a2472;transform:scaleX(1.0344);">Recipe</div>
<div id="t18" class="t" style="left:216.50px;top:121.00px;font-size:15.26px;font-weight:400;color:#111;">R</div>
<div id="t19" class="t" style="left:238.50px;top:122.00px;font-size:17.44px;font-weight:400;color:#0d3c8c;transform:scaleX(1.1308);-webkit-text-stroke:0.25px #0d3c8c;">Angus Cheeseburger Recipe</div>
<div id="t20" class="t" style="left:1465.80px;top:101.02px;font-size:17.15px;font-weight:400;color:#333;-webkit-text-stroke:0.65px #333;transform:scaleX(1.0698);">Global</div>
<div id="t21" class="t" style="left:1585.80px;top:101.02px;font-size:17.15px;font-weight:400;color:#333;-webkit-text-stroke:0.65px #333;transform:scaleX(1.0909);">English - United States</div>
<div id="t22" class="t" style="left:253.00px;top:171.02px;font-size:12.79px;font-weight:400;color:#7e95b5;-webkit-text-stroke:0.49px #7e95b5;transform:scaleX(1.1279);">Master Classification</div>
<div id="t23" class="t" style="left:253.00px;top:189.00px;font-size:15.84px;font-weight:400;color:#333;transform:scaleX(1.0829);">Burgers</div>
<div id="t24" class="t" style="left:254.00px;top:224.01px;font-size:12.35px;font-weight:400;color:#7e95b5;-webkit-text-stroke:0.47px #7e95b5;transform:scaleX(1.1735);">Allergens</div>
<div id="t25" class="t" style="left:254.00px;top:241.01px;font-size:15.84px;font-weight:400;color:#333;transform:scaleX(1.0830);">Wheat | Milk</div>
<div id="t26" class="t" style="left:550.40px;top:171.02px;font-size:12.79px;font-weight:400;color:#7e95b5;-webkit-text-stroke:0.49px #7e95b5;transform:scaleX(1.1036);">presalesRecipeId</div>
<div id="t27" class="t" style="left:549.40px;top:189.00px;font-size:15.84px;font-weight:400;color:#333;transform:scaleX(1.0619);">cheeseburgerrecipe001</div>
<div id="t28" class="t" style="left:847.40px;top:171.02px;font-size:12.79px;font-weight:400;color:#7e95b5;-webkit-text-stroke:0.49px #7e95b5;transform:scaleX(1.1064);">presalesRecipeName</div>
<div id="t29" class="t" style="left:847.40px;top:189.00px;font-size:15.84px;font-weight:400;color:#333;transform:scaleX(1.0587);">Angus Cheeseburger Recipe</div>
<div id="t30" class="t" style="left:1144.60px;top:171.02px;font-size:12.79px;font-weight:400;color:#7e95b5;-webkit-text-stroke:0.49px #7e95b5;transform:scaleX(1.1049);">Total Cost</div>
<div id="t31" class="t" style="left:1143.60px;top:189.00px;font-size:15.84px;font-weight:400;color:#333;transform:scaleX(0.9262);">3.1287</div>
<div id="t32" class="t" style="left:1487.00px;top:206.01px;font-size:17.01px;font-weight:400;color:#98a8c2;transform:scaleX(1.0826);">100</div>
<div id="t33" class="t" style="left:1599.00px;top:206.01px;font-size:15.70px;font-weight:700;color:#fff;transform:scaleX(1.0081);">Actions</div>
<div id="t34" class="t" style="left:1467.40px;top:237.01px;font-size:12.35px;font-weight:400;color:#333;transform:scaleX(0.9465);">Previous changes have been processed by the system. Click here to see the changes</div>
<div id="t35" class="t" style="left:137.80px;top:291.01px;font-size:16.72px;font-weight:400;color:#5a6478;-webkit-text-stroke:0.64px #5a6478;transform:scaleX(1.0411);">Summary</div>
<div id="t36" class="t" style="left:225.60px;top:291.01px;font-size:16.72px;font-weight:400;color:#5a6478;-webkit-text-stroke:0.64px #5a6478;transform:scaleX(1.0969);">Attributes</div>
<div id="t37" class="t" style="left:340.20px;top:284.01px;font-size:14.10px;font-weight:400;color:#333;-webkit-text-stroke:0.54px #333;transform:scaleX(1.1962);">Ingredients</div>
<div id="t38" class="t" style="left:340.20px;top:301.01px;font-size:14.83px;font-weight:400;color:#333;-webkit-text-stroke:0.56px #333;transform:scaleX(1.1773);">Relationships</div>
<div id="t39" class="t" style="left:483.40px;top:291.01px;font-size:16.72px;font-weight:400;color:#5a6478;-webkit-text-stroke:0.64px #5a6478;transform:scaleX(0.9933);">Assets</div>
<div id="t40" class="t" style="left:570.00px;top:291.01px;font-size:16.72px;font-weight:400;color:#5a6478;-webkit-text-stroke:0.64px #5a6478;transform:scaleX(1.0449);">Entity Graph</div>
<div id="t41" class="t" style="left:679.20px;top:291.01px;font-size:16.72px;font-weight:400;color:#5a6478;-webkit-text-stroke:0.64px #5a6478;transform:scaleX(1.0753);">Entity Network</div>
<div id="t42" class="t" style="left:1503.00px;top:290.00px;font-size:15.99px;font-weight:400;color:#333;-webkit-text-stroke:0.61px #333;transform:scaleX(1.1217);">Workflow</div>
<div id="t43" class="t" style="left:1589.00px;top:290.00px;font-size:15.99px;font-weight:400;color:#5a6478;-webkit-text-stroke:0.61px #5a6478;transform:scaleX(1.1200);">Recent Activity</div>
<div id="t44" class="t" style="left:729.60px;top:343.01px;font-size:14.53px;font-weight:400;color:#555;transform:scaleX(1.0610);">Last refreshed now</div>
<div id="t45" class="t" style="left:887.50px;top:343.01px;font-size:14.53px;font-weight:400;color:#444;-webkit-text-stroke:0.55px #444;transform:scaleX(0.9512);">1 - 5 / 5</div>
<div id="t46" class="t" style="left:973.00px;top:344.00px;font-size:14.53px;font-weight:400;color:#1a5fb4;-webkit-text-stroke:0.55px #1a5fb4;transform:scaleX(1.2158);">More Actions</div>
<div id="t47" class="t" style="left:186.40px;top:378.00px;font-size:15.99px;font-weight:400;color:#3a3a3a;-webkit-text-stroke:0.61px #3a3a3a;transform:scaleX(1.1417);">Info</div>
<div id="t48" class="t" style="left:337.80px;top:378.00px;font-size:15.99px;font-weight:400;color:#3a3a3a;-webkit-text-stroke:0.61px #3a3a3a;transform:scaleX(1.1230);">thumbna...</div>
<div id="t49" class="t" style="left:436.40px;top:378.00px;font-size:15.99px;font-weight:400;color:#3a3a3a;-webkit-text-stroke:0.61px #3a3a3a;transform:scaleX(1.1276);">Ingredient ID</div>
<div id="t50" class="t" style="left:605.00px;top:378.00px;font-size:15.99px;font-weight:400;color:#3a3a3a;-webkit-text-stroke:0.61px #3a3a3a;transform:scaleX(1.1169);">Ingredient Name</div>
<div id="t51" class="t" style="left:774.60px;top:378.00px;font-size:15.99px;font-weight:400;color:#3a3a3a;-webkit-text-stroke:0.61px #3a3a3a;transform:scaleX(1.0150);">UOM</div>
<div id="t52" class="t" style="left:944.60px;top:378.00px;font-size:15.99px;font-weight:400;color:#3a3a3a;-webkit-text-stroke:0.61px #3a3a3a;transform:scaleX(1.1154);">Quantity</div>
<div id="t53" class="t" style="left:1112.80px;top:378.00px;font-size:15.99px;font-weight:400;color:#3a3a3a;-webkit-text-stroke:0.61px #3a3a3a;transform:scaleX(1.0680);">Unit Cost</div>
<div id="t54" class="t" style="left:1280.20px;top:378.00px;font-size:15.99px;font-weight:400;color:#3a3a3a;-webkit-text-stroke:0.61px #3a3a3a;transform:scaleX(1.0996);">Ingredient Cost</div>
<div id="t55" class="t" style="left:437.00px;top:447.02px;font-size:15.26px;font-weight:400;color:#2f6db5;transform:scaleX(1.0856);">34567</div>
<div id="t56" class="t" style="left:606.00px;top:447.02px;font-size:15.26px;font-weight:400;color:#2f6db5;transform:scaleX(1.0272);">ROMAINE LETTUCE</div>
<div id="t57" class="t" style="left:775.40px;top:447.02px;font-size:15.26px;font-weight:400;color:#444;transform:scaleX(1.0964);">Each</div>
<div id="t58" class="t" style="left:944.50px;top:447.02px;font-size:15.26px;font-weight:400;color:#444;">2</div>
<div id="t59" class="t" style="left:1112.40px;top:447.02px;font-size:15.26px;font-weight:400;color:#444;transform:scaleX(1.0386);">.5865</div>
<div id="t60" class="t" style="left:1281.00px;top:447.02px;font-size:15.26px;font-weight:400;color:#444;transform:scaleX(0.8793);">1.1730</div>
<div id="t61" class="t" style="left:437.00px;top:484.02px;font-size:15.26px;font-weight:400;color:#2f6db5;transform:scaleX(1.0396);">2140</div>
<div id="t62" class="t" style="left:606.00px;top:484.02px;font-size:15.26px;font-weight:400;color:#2f6db5;transform:scaleX(1.0475);">BUN POTATO 4" 8/...</div>
<div id="t63" class="t" style="left:775.40px;top:484.02px;font-size:15.26px;font-weight:400;color:#444;transform:scaleX(1.0964);">Each</div>
<div id="t64" class="t" style="left:944.50px;top:484.02px;font-size:15.26px;font-weight:400;color:#444;">1</div>
<div id="t65" class="t" style="left:1113.40px;top:484.02px;font-size:15.26px;font-weight:400;color:#444;transform:scaleX(0.9560);">0.2812</div>
<div id="t66" class="t" style="left:1282.00px;top:484.02px;font-size:15.26px;font-weight:400;color:#444;transform:scaleX(0.9517);">0.2812</div>
<div id="t67" class="t" style="left:437.00px;top:522.02px;font-size:15.26px;font-weight:400;color:#2f6db5;transform:scaleX(1.1545);">angusbeefpatty</div>
<div id="t68" class="t" style="left:607.00px;top:522.02px;font-size:15.26px;font-weight:400;color:#2f6db5;transform:scaleX(1.0146);">ANGUS BEEF PATTY</div>
<div id="t69" class="t" style="left:775.40px;top:522.02px;font-size:15.26px;font-weight:400;color:#444;transform:scaleX(1.0964);">Each</div>
<div id="t70" class="t" style="left:944.50px;top:522.02px;font-size:15.26px;font-weight:400;color:#444;">1</div>
<div id="t71" class="t" style="left:1112.40px;top:522.02px;font-size:15.26px;font-weight:400;color:#444;transform:scaleX(0.9568);">1.2545</div>
<div id="t72" class="t" style="left:1281.00px;top:522.02px;font-size:15.26px;font-weight:400;color:#444;transform:scaleX(0.9568);">1.2545</div>
<div id="t73" class="t" style="left:437.00px;top:559.02px;font-size:15.26px;font-weight:400;color:#2f6db5;transform:scaleX(1.0396);">0169</div>
<div id="t74" class="t" style="left:606.00px;top:559.02px;font-size:15.26px;font-weight:400;color:#2f6db5;transform:scaleX(0.9805);">CHEESE PROCESS...</div>
<div id="t75" class="t" style="left:775.40px;top:559.02px;font-size:15.26px;font-weight:400;color:#444;transform:scaleX(0.9977);">1 Slice</div>
<div id="t76" class="t" style="left:944.50px;top:559.02px;font-size:15.26px;font-weight:400;color:#444;">2</div>
<div id="t77" class="t" style="left:1112.40px;top:559.02px;font-size:15.26px;font-weight:400;color:#444;transform:scaleX(1.0639);">0.0538</div>
<div id="t78" class="t" style="left:1282.00px;top:559.02px;font-size:15.26px;font-weight:400;color:#444;transform:scaleX(0.9646);">0.1076</div>
<div id="t79" class="t" style="left:437.00px;top:597.02px;font-size:15.26px;font-weight:400;color:#2f6db5;transform:scaleX(1.0505);">0189</div>
<div id="t80" class="t" style="left:606.00px;top:597.02px;font-size:15.26px;font-weight:400;color:#2f6db5;transform:scaleX(1.0025);">ONIONS SHORT SL...</div>
<div id="t81" class="t" style="left:775.40px;top:597.02px;font-size:15.26px;font-weight:400;color:#444;transform:scaleX(1.0791);">oz</div>
<div id="t82" class="t" style="left:944.50px;top:597.02px;font-size:15.26px;font-weight:400;color:#444;">2</div>
<div id="t83" class="t" style="left:1113.40px;top:597.02px;font-size:15.26px;font-weight:400;color:#444;transform:scaleX(0.9345);">0.1562</div>
<div id="t84" class="t" style="left:1282.00px;top:597.02px;font-size:15.26px;font-weight:400;color:#444;transform:scaleX(0.9517);">0.3124</div>
<div id="t85" class="t" style="left:1556.60px;top:342.01px;font-size:14.53px;font-weight:400;color:#444;transform:scaleX(1.0885);">My workflows</div>
<div id="t86" class="t" style="left:1757.00px;top:342.01px;font-size:14.53px;font-weight:400;color:#444;transform:scaleX(1.0794);">Active workflows</div>
<div id="t87" class="t" style="left:1505.80px;top:379.02px;font-size:18.02px;font-weight:400;color:#1a6fc0;transform:scaleX(1.0130);-webkit-text-stroke:0.5px #1a6fc0;">New Recipe WF</div>
<div id="t88" class="t" style="left:1506.00px;top:410.01px;font-size:14.53px;font-weight:400;color:#333;transform:scaleX(1.0154);">Workflow started at 10/31/2025 09:17:30 AM</div>
<div id="t89" class="t" style="left:1519.50px;top:452.01px;font-size:16.72px;font-weight:400;color:#fff;">3</div>
<div id="t90" class="t" style="left:1556.20px;top:451.00px;font-size:17.44px;font-weight:400;color:#555;transform:scaleX(1.0454);">Assign Product</div>
<div id="t91" class="t" style="left:1519.50px;top:502.01px;font-size:16.72px;font-weight:400;color:#fff;">2</div>
<div id="t92" class="t" style="left:1556.00px;top:501.02px;font-size:16.13px;font-weight:400;color:#2f78c4;transform:scaleX(1.1271);">Recipe Approval</div>
<div id="t93" class="t" style="left:1593.00px;top:538.01px;font-size:13.95px;font-weight:400;color:#444;transform:scaleX(1.1147);">Unassigned</div>
<div id="t94" class="t" style="left:1561.60px;top:568.01px;font-size:14.83px;font-weight:400;color:#c8c8c8;transform:scaleX(1.1689);">Add a comment</div>
<div id="t95" class="t" style="left:1570.00px;top:635.01px;font-size:14.83px;font-weight:400;color:#c8c8c8;-webkit-text-stroke:0.56px #c8c8c8;transform:scaleX(1.1587);">Approve</div>
<div id="t96" class="t" style="left:1675.00px;top:635.01px;font-size:14.83px;font-weight:400;color:#c8c8c8;-webkit-text-stroke:0.56px #c8c8c8;transform:scaleX(1.1421);">Reject</div>
<div id="t97" class="t" style="left:1521.00px;top:698.01px;font-size:16.72px;font-weight:400;color:#fff;">1</div>
<div id="t98" class="t" style="left:1554.60px;top:698.01px;font-size:16.72px;font-weight:400;color:#2db83d;transform:scaleX(1.0715);">Create Recipe</div>
<div id="t99" class="t" style="left:1593.00px;top:733.00px;font-size:14.24px;font-weight:400;color:#555;transform:scaleX(1.0149);">Unassigned 'Done' on 10/31/2025 12:44:01</div>
<div id="t100" class="t" style="left:1593.00px;top:753.01px;font-size:14.24px;font-weight:400;color:#555;transform:scaleX(1.0975);">PM with the comment Reac</div>
<div id="t101" class="t" style="left:1786.40px;top:753.01px;font-size:14.24px;font-weight:400;color:#2f78c4;transform:scaleX(1.0594);">...Show more</div>
<div id="t102" class="t" style="left:1872.00px;top:981.01px;font-size:14.53px;font-weight:700;color:#2a2f4a;">3</div>
</body></html>
